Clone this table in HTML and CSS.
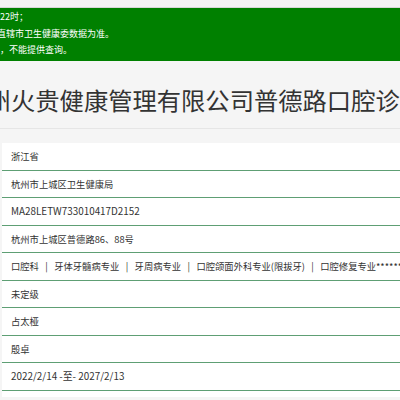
FILE: index.html
```html
<!DOCTYPE html>
<html lang="zh-CN">
<head>
<meta charset="utf-8">
<link rel="stylesheet" href="styles.css">
</head>
<body>
<div class="topbar"></div>
<div class="notice">
  <p class="l1">22时；</p>
  <p class="l2">直辖市卫生健康委数据为准。</p>
  <p class="l3">，不能提供查询。</p>
</div>
<h1 class="title">杭州火贵健康管理有限公司普德路口腔诊所</h1>
<div class="table">
  <div class="row">浙江省</div>
  <div class="row">杭州市上城区卫生健康局</div>
  <div class="row latin">MA28LETW733010417D2152</div>
  <div class="row">杭州市上城区普德路86、88号</div>
  <div class="row">口腔科<span class="sep">|</span>牙体牙髓病专业<span class="sep">|</span>牙周病专业<span class="sep">|</span>口腔颌面外科专业(限拔牙)<span class="sep">|</span>口腔修复专业******</div>
  <div class="row">未定级</div>
  <div class="row">占太桠</div>
  <div class="row">殷卓</div>
  <div class="row latin">2022/2/14 -至- 2027/2/13</div>
</div>
</body>
</html>
```
FILE: styles.css
```css
html, body {
  margin: 0;
  padding: 0;
}
body {
  width: 400px;
  height: 400px;
  overflow: hidden;
  background: #f5f5f5;
  font-family: "Noto Sans CJK SC", "Noto Sans", sans-serif;
  color: #333;
}
.topbar {
  height: 7px;
  background: #f4f4f4;
  border-bottom: 1px solid #d8d8d8;
}
.notice {
  background: #008000;
  color: #fff;
  height: 53px;
  padding: 1px 0 0 0;
  box-sizing: border-box;
  font-size: 9px;
  line-height: 16.5px;
}
.notice p {
  margin: 0;
  white-space: nowrap;
}
.notice .l2 {
  text-indent: -3px;
}
.title {
  margin: 0 0 14px 0;
  padding: 24px 0 13px 0;
  border-bottom: 1px solid #e6e6e6;
  font-size: 24.3px;
  line-height: 30px;
  font-weight: normal;
  color: #333;
  white-space: nowrap;
  overflow: hidden;
  text-indent: -37.6px;
}
.table {
  background: #fff;
  margin-left: 2px;
  padding-bottom: 6px;
}
.row {
  padding: 5px 9px;
  line-height: 16.5px;
  font-size: 9.3px;
  color: #333;
  border-bottom: 1px solid #5e9f74;
  white-space: nowrap;
  overflow: hidden;
}
.row.latin {
  font-size: 9.9px;
}
.sep {
  padding: 0 6.4px;
}
```
